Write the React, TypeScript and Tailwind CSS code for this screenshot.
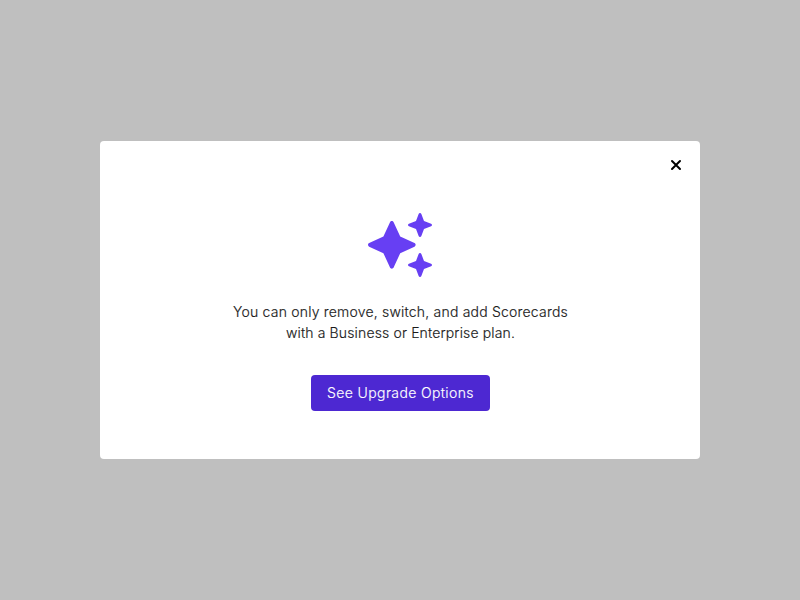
export default function App() {
  return (
    <div className="flex h-screen w-screen items-center justify-center bg-[#bfbfbf] font-['Inter',sans-serif]">
      <div role="dialog" className="flex h-[318px] w-[600px] flex-col rounded bg-white">
        <div className="flex h-12 items-center justify-end pr-[18px]">
          <button aria-label="Close" className="text-black">
            <svg className="block size-3" viewBox="0 0 12 12" fill="none" stroke="currentColor" strokeWidth="2" strokeLinecap="round">
              <path d="M2 2l8 8M10 2l-8 8" />
            </svg>
          </button>
        </div>
        <div className="flex flex-col items-center pt-6">
          <svg className="block size-16" viewBox="0 0 512 512" fill="#673ff3">
            <path d="M327.5 85.2c-4.5 1.7-7.5 6-7.5 10.8s3 9.1 7.5 10.8L384 128l21.2 56.5c1.7 4.5 6 7.5 10.8 7.5s9.1-3 10.8-7.5L448 128l56.5-21.2c4.5-1.7 7.5-6 7.5-10.8s-3-9.1-7.5-10.8L448 64 426.8 7.5C425.1 3 420.8 0 416 0s-9.1 3-10.8 7.5L384 64 327.5 85.2zM205.1 73.3c-2.6-5.7-8.3-9.3-14.5-9.3s-11.9 3.6-14.5 9.3L123.3 187.3 9.3 240C3.6 242.6 0 248.3 0 254.6s3.6 11.9 9.3 14.5l114.1 52.7L176 435.8c2.6 5.7 8.3 9.3 14.5 9.3s11.9-3.6 14.5-9.3l52.7-114.1 114.1-52.7c5.7-2.6 9.3-8.3 9.3-14.5s-3.6-11.9-9.3-14.5L257.8 187.4 205.1 73.3zM384 384l-56.5 21.2c-4.5 1.7-7.5 6-7.5 10.8s3 9.1 7.5 10.8L384 448l21.2 56.5c1.7 4.5 6 7.5 10.8 7.5s9.1-3 10.8-7.5L448 448l56.5-21.2c4.5-1.7 7.5-6 7.5-10.8s-3-9.1-7.5-10.8L448 384l-21.2-56.5c-1.7-4.5-6-7.5-10.8-7.5s-9.1 3-10.8 7.5L384 384z" />
          </svg>
          <p className="mt-6 pl-px text-center text-sm leading-[21px] font-light text-[#1a1a1a] [-webkit-text-stroke:0.15px_currentColor]">
            <span className="block tracking-[0.2px]">You can only remove, switch, and add Scorecards</span>
            <span className="block tracking-[0.14px]">with a Business or Enterprise plan.</span>
          </p>
          <button className="mt-8 h-9 w-[179px] rounded bg-[#4d28d2] pl-px text-sm font-light tracking-[0.38px] text-white [-webkit-text-stroke:0.15px_currentColor]">
            See Upgrade Options
          </button>
        </div>
      </div>
    </div>
  );
}
